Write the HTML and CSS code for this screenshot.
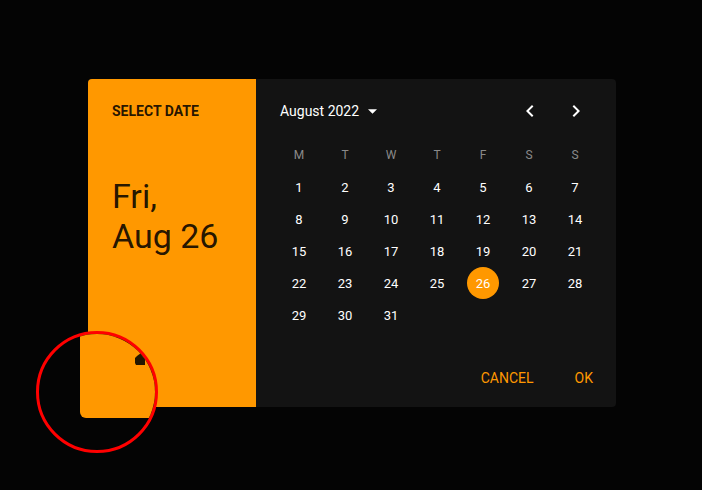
FILE: index.html
```html
<!DOCTYPE html>
<html>
<head>
<meta charset="utf-8">
<link rel="stylesheet" href="styles.css">
</head>
<body>
<div class="stage">
  <div class="dialog">
    <div class="summary">
      <div class="overline">SELECT DATE</div>
      <div class="big-date">Fri,<br>Aug 26</div>
    </div>
    <div class="picker">
      <div class="picker-head">
        <div class="month">August 2022
          <svg class="drop" viewBox="7 10 10 5" width="9" height="5"><path d="M7 10l5 5 5-5z" fill="#fff"/></svg>
        </div>
        <div class="nav">
          <svg viewBox="0 0 24 24" width="24" height="24"><path d="M15.41 7.41L14 6l-6 6 6 6 1.41-1.41L10.83 12z" fill="#fff"/></svg>
          <svg viewBox="0 0 24 24" width="24" height="24"><path d="M10 6L8.59 7.41 13.17 12l-4.58 4.59L10 18l6-6z" fill="#fff"/></svg>
        </div>
      </div>
      <div class="grid">
        <span class="wd">M</span><span class="wd">T</span><span class="wd">W</span><span class="wd">T</span><span class="wd">F</span><span class="wd">S</span><span class="wd">S</span>
        <span class="d">1</span><span class="d">2</span><span class="d">3</span><span class="d">4</span><span class="d">5</span><span class="d">6</span><span class="d">7</span>
        <span class="d">8</span><span class="d">9</span><span class="d">10</span><span class="d">11</span><span class="d">12</span><span class="d">13</span><span class="d">14</span>
        <span class="d">15</span><span class="d">16</span><span class="d">17</span><span class="d">18</span><span class="d">19</span><span class="d">20</span><span class="d">21</span>
        <span class="d">22</span><span class="d">23</span><span class="d">24</span><span class="d">25</span><span class="d sel"><i>26</i></span><span class="d">27</span><span class="d">28</span>
        <span class="d">29</span><span class="d">30</span><span class="d">31</span>
      </div>
      <div class="actions">
        <button class="btn">CANCEL</button>
        <button class="btn">OK</button>
      </div>
    </div>
  </div>
  <div class="lens">
    <div class="lens-fill"></div>
    <svg class="blob" viewBox="0 0 10 12" width="10" height="12"><path d="M2 3 L6 0 L7 1 L10 4 L10 12 L1 12 L0 10 L0 5 Z" fill="#231600"/></svg>
  </div>
</div>
</body>
</html>
```
FILE: styles.css
```css
html, body {
  margin: 0;
  padding: 0;
  background: #040404;
  width: 702px;
  height: 490px;
  overflow: hidden;
  font-family: Roboto, "Liberation Sans", sans-serif;
}
.stage {
  position: relative;
  width: 702px;
  height: 490px;
  padding-top: 79px;
  padding-left: 88px;
  box-sizing: border-box;
}
.dialog {
  display: flex;
  width: 528px;
  height: 328px;
  border-radius: 4px;
  overflow: hidden;
  background: #131313;
}
.summary {
  width: 168px;
  background: #ff9800;
  color: rgba(0,0,0,0.87);
  padding: 22px 0 0 24px;
  box-sizing: border-box;
}
.overline {
  font-size: 14px;
  font-weight: 700;
  line-height: 20px;
}
.big-date {
  margin-top: 55px;
  font-size: 34px;
  line-height: 40px;
  font-weight: 400;
}
.picker {
  width: 360px;
  display: flex;
  flex-direction: column;
  padding: 4px 18px 11px 20px;
  box-sizing: border-box;
}
.picker-head {
  height: 56px;
  display: flex;
  align-items: center;
  justify-content: space-between;
}
.month {
  display: flex;
  align-items: center;
  padding-left: 4px;
  color: #fff;
  font-size: 14px;
  font-weight: 400;
}
.drop {
  margin-left: 9px;
}
.nav {
  display: flex;
  gap: 22px;
  margin-right: 10px;
}
.nav svg { display: block; }
.grid {
  display: grid;
  grid-template-columns: repeat(7, 46px);
  grid-auto-rows: 32px;
}
.grid span {
  display: flex;
  align-items: center;
  justify-content: center;
}
.wd {
  color: #8a8a8a;
  font-size: 12px;
}
.d {
  color: #fff;
  font-size: 13px;
}
.sel i {
  font-style: normal;
  width: 32px;
  height: 32px;
  border-radius: 50%;
  background: #ff9800;
  display: flex;
  align-items: center;
  justify-content: center;
}
.actions {
  margin-top: auto;
  margin-right: -3px;
  display: flex;
  justify-content: flex-end;
  gap: 25px;
}
.btn {
  background: none;
  border: 0;
  height: 36px;
  padding: 0 8px;
  color: #ff9800;
  font-family: Roboto, "Liberation Sans", sans-serif;
  font-size: 14px;
  font-weight: 400;
}
.lens {
  position: absolute;
  left: 36px;
  top: 331px;
  width: 116px;
  height: 116px;
  border: 3px solid #ff0000;
  border-radius: 50%;
  overflow: hidden;
  background: #040404;
}
.lens-fill {
  position: absolute;
  left: 41px;
  top: -10px;
  width: 120px;
  height: 94px;
  background: #ff9800;
  border-bottom-left-radius: 6px;
}
.blob {
  position: absolute;
  left: 96px;
  top: 19px;
}
```
